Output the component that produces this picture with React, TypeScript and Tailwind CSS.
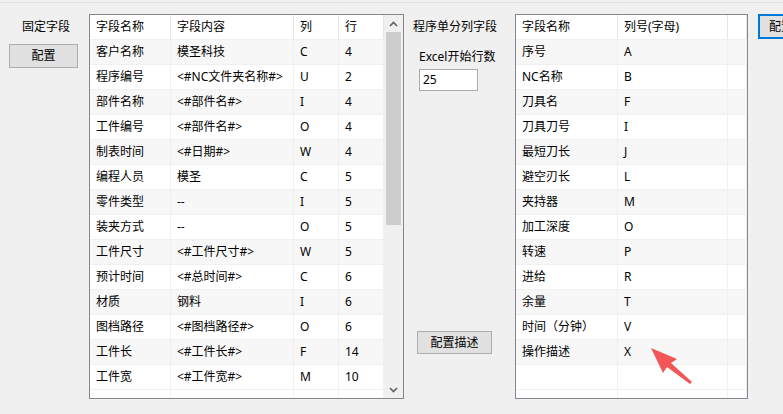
import React from "react";

type FixedField = [string, string, string, string];

const fixedFields: FixedField[] = [
  ["客户名称", "模圣科技", "C", "4"],
  ["程序编号", "<#NC文件夹名称#>", "U", "2"],
  ["部件名称", "<#部件名#>", "I", "4"],
  ["工件编号", "<#部件名#>", "O", "4"],
  ["制表时间", "<#日期#>", "W", "4"],
  ["编程人员", "模圣", "C", "5"],
  ["零件类型", "--", "I", "5"],
  ["装夹方式", "--", "O", "5"],
  ["工件尺寸", "<#工件尺寸#>", "W", "5"],
  ["预计时间", "<#总时间#>", "C", "6"],
  ["材质", "钢料", "I", "6"],
  ["图档路径", "<#图档路径#>", "O", "6"],
  ["工件长", "<#工件长#>", "F", "14"],
  ["工件宽", "<#工件宽#>", "M", "10"],
];

const columnFields: [string, string][] = [
  ["序号", "A"],
  ["NC名称", "B"],
  ["刀具名", "F"],
  ["刀具刀号", "I"],
  ["最短刀长", "J"],
  ["避空刃长", "L"],
  ["夹持器", "M"],
  ["加工深度", "O"],
  ["转速", "P"],
  ["进给", "R"],
  ["余量", "T"],
  ["时间（分钟）", "V"],
  ["操作描述", "X"],
];

const leftWidths = ["w-[81px]", "w-[123px]", "w-[45px]", "w-[45px]"];
const rightWidths = ["w-[102px]", "w-[110px]", "w-[19px]"];

function Cell({ w, head, children }: { w: string; head?: boolean; children?: React.ReactNode }) {
  return (
    <div
      className={`${w} shrink-0 h-full flex items-center pl-[6px] border-r whitespace-nowrap overflow-hidden ${
        head ? "border-[#e5e5e5]" : "border-[#f0f0f0]"
      }`}
    >
      {children}
    </div>
  );
}

function Row({ cells, widths, shaded, head }: { cells: string[]; widths: string[]; shaded?: boolean; head?: boolean }) {
  return (
    <div
      className={`flex shrink-0 h-[25px] border-b border-[#f0f0f0] ${shaded ? "bg-[#f7f7f7]" : "bg-white"}`}
    >
      {widths.map((w, i) => (
        <Cell key={i} w={w} head={head}>
          {cells[i] ?? ""}
        </Cell>
      ))}
    </div>
  );
}

function ScrollBar() {
  return (
    <div className="w-[19px] shrink-0 h-full bg-[#f0f0f0] flex flex-col items-center">
      <div className="h-[17px] w-full flex items-center justify-center">
        <svg width="9" height="6" viewBox="0 0 9 6">
          <path d="M1 5 L4.5 1.5 L8 5" fill="none" stroke="#606060" strokeWidth="1.6" />
        </svg>
      </div>
      <div className="w-[15px] h-[193px] bg-[#cdcdcd]" />
      <div className="flex-1" />
      <div className="h-[17px] w-full flex items-center justify-center">
        <svg width="9" height="6" viewBox="0 0 9 6">
          <path d="M1 1 L4.5 4.5 L8 1" fill="none" stroke="#606060" strokeWidth="1.6" />
        </svg>
      </div>
    </div>
  );
}

function FixedGrid() {
  return (
    <div className="w-[315px] h-[385px] shrink-0 border border-[#828790] bg-white flex overflow-hidden">
      <div className="flex-1 flex flex-col overflow-hidden">
        <Row cells={["字段名称", "字段内容", "列", "行"]} widths={leftWidths} head />
        {fixedFields.map((r, i) => (
          <Row key={i} cells={r} widths={leftWidths} shaded={i % 2 === 0} />
        ))}
        <Row cells={[]} widths={leftWidths} />
      </div>
      <ScrollBar />
    </div>
  );
}

function ColumnGrid() {
  return (
    <div className="w-[233px] h-[385px] shrink-0 border border-[#828790] bg-white flex flex-col overflow-hidden">
      <Row cells={["字段名称", "列号(字母)", ""]} widths={rightWidths} head />
      {columnFields.map((r, i) => (
        <Row key={i} cells={[r[0], r[1], ""]} widths={rightWidths} shaded={i % 2 === 0} />
      ))}
      <Row cells={[]} widths={rightWidths} />
      <Row cells={[]} widths={rightWidths} />
    </div>
  );
}

function WinButton({ className, children }: { className: string; children: React.ReactNode }) {
  return (
    <button className={`bg-[#e1e1e1] flex items-center justify-center text-[12px] text-black ${className}`}>
      {children}
    </button>
  );
}

export default function App() {
  return (
    <div className="relative w-[783px] h-[414px] overflow-hidden bg-[#f0f0f0] text-[12px] leading-4 text-black font-['Noto_Sans','Noto_Sans_CJK_SC',sans-serif]">
      <div className="mt-[2px] h-px bg-[#e3e3e3]" />
      <div className="flex items-start mt-[11px]">
        {/* fixed fields */}
        <div className="w-[89px] shrink-0 flex flex-col">
          <div className="pt-[5px] pl-[22px]">固定字段</div>
          <WinButton className="mt-[9px] ml-[9px] w-[69px] h-[24px] border border-[#adadad]">配置</WinButton>
        </div>
        <FixedGrid />

        {/* program column fields */}
        <div className="w-[111px] shrink-0 flex flex-col">
          <div className="mt-[5px] pl-[9px]">程序单分列字段</div>
          <div className="mt-[14px] pl-[15px]">Excel开始行数</div>
          <div className="mt-[4px] ml-[15px] w-[59px] h-[22px] bg-white border border-[#adadad] flex items-center pl-[3px]">
            25
          </div>
          <WinButton className="mt-[240px] ml-[13px] w-[75px] h-[23px] border border-[#adadad]">配置描述</WinButton>
        </div>
        <ColumnGrid />

        <WinButton className="ml-[10px] w-[75px] h-[25px] shrink-0 border-2 border-[#0078d7] justify-start pl-[9px]">
          配置
        </WinButton>
      </div>

      {/* red pointer arrow */}
      <svg className="absolute left-0 top-0 pointer-events-none" width="783" height="414">
        <polygon
          points="651,348 677,359 671,363 692,382 690,384 667,367 663,373"
          fill="#f35656"
        />
      </svg>
    </div>
  );
}
